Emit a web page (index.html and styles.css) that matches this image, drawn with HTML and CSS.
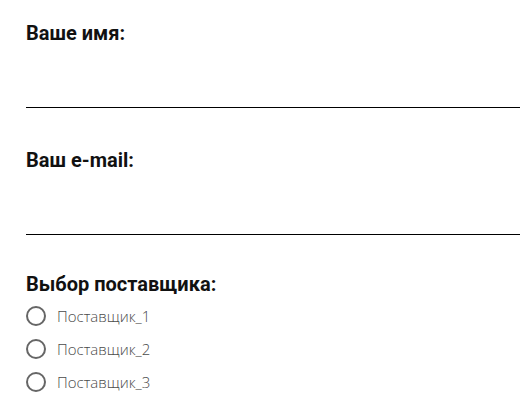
FILE: index.html
```html
<!DOCTYPE html>
<html lang="ru">
<head>
<meta charset="utf-8">
<link rel="stylesheet" href="styles.css">
</head>
<body>
<form class="form">
  <div class="field">
    <label class="label" for="name">Ваше имя:</label>
    <input class="input" id="name" type="text">
  </div>
  <div class="field">
    <label class="label" for="email">Ваш e-mail:</label>
    <input class="input" id="email" type="text">
  </div>
  <div class="field field-radio">
    <div class="label">Выбор поставщика:</div>
    <div class="options">
      <label class="option"><input type="radio" name="sup" class="radio"><span class="circle"></span><span class="option-text">Поставщик_1</span></label>
      <label class="option"><input type="radio" name="sup" class="radio"><span class="circle"></span><span class="option-text">Поставщик_2</span></label>
      <label class="option"><input type="radio" name="sup" class="radio"><span class="circle"></span><span class="option-text">Поставщик_3</span></label>
    </div>
  </div>
</form>
</body>
</html>
```
FILE: styles.css
```css
html, body {
  margin: 0;
  padding: 0;
  background: #fff;
}
.form {
  display: flex;
  flex-direction: column;
  padding: 21px 1px 0 26px;
  gap: 40px;
}
.field {
  display: flex;
  flex-direction: column;
}
.label {
  font-family: Roboto, "Liberation Sans", sans-serif;
  font-weight: 700;
  font-size: 20px;
  line-height: 24px;
  color: #111;
}
.input {
  display: block;
  border: none;
  border-bottom: 1px solid #000;
  height: 62px;
  padding: 0;
  margin: 0;
  outline: none;
  background: transparent;
}
.field-radio {
  margin-top: -3px;
}
.options {
  display: flex;
  flex-direction: column;
  gap: 13px;
  margin-top: 10px;
}
.option {
  display: flex;
  align-items: center;
  gap: 11px;
  height: 20px;
}
.radio {
  display: none;
}
.circle {
  box-sizing: border-box;
  width: 20px;
  height: 20px;
  border: 2px solid #666;
  border-radius: 50%;
}
.option-text {
  font-family: "Open Sans", sans-serif;
  font-weight: 300;
  font-size: 15px;
  color: #4a4a4a;
}
```
